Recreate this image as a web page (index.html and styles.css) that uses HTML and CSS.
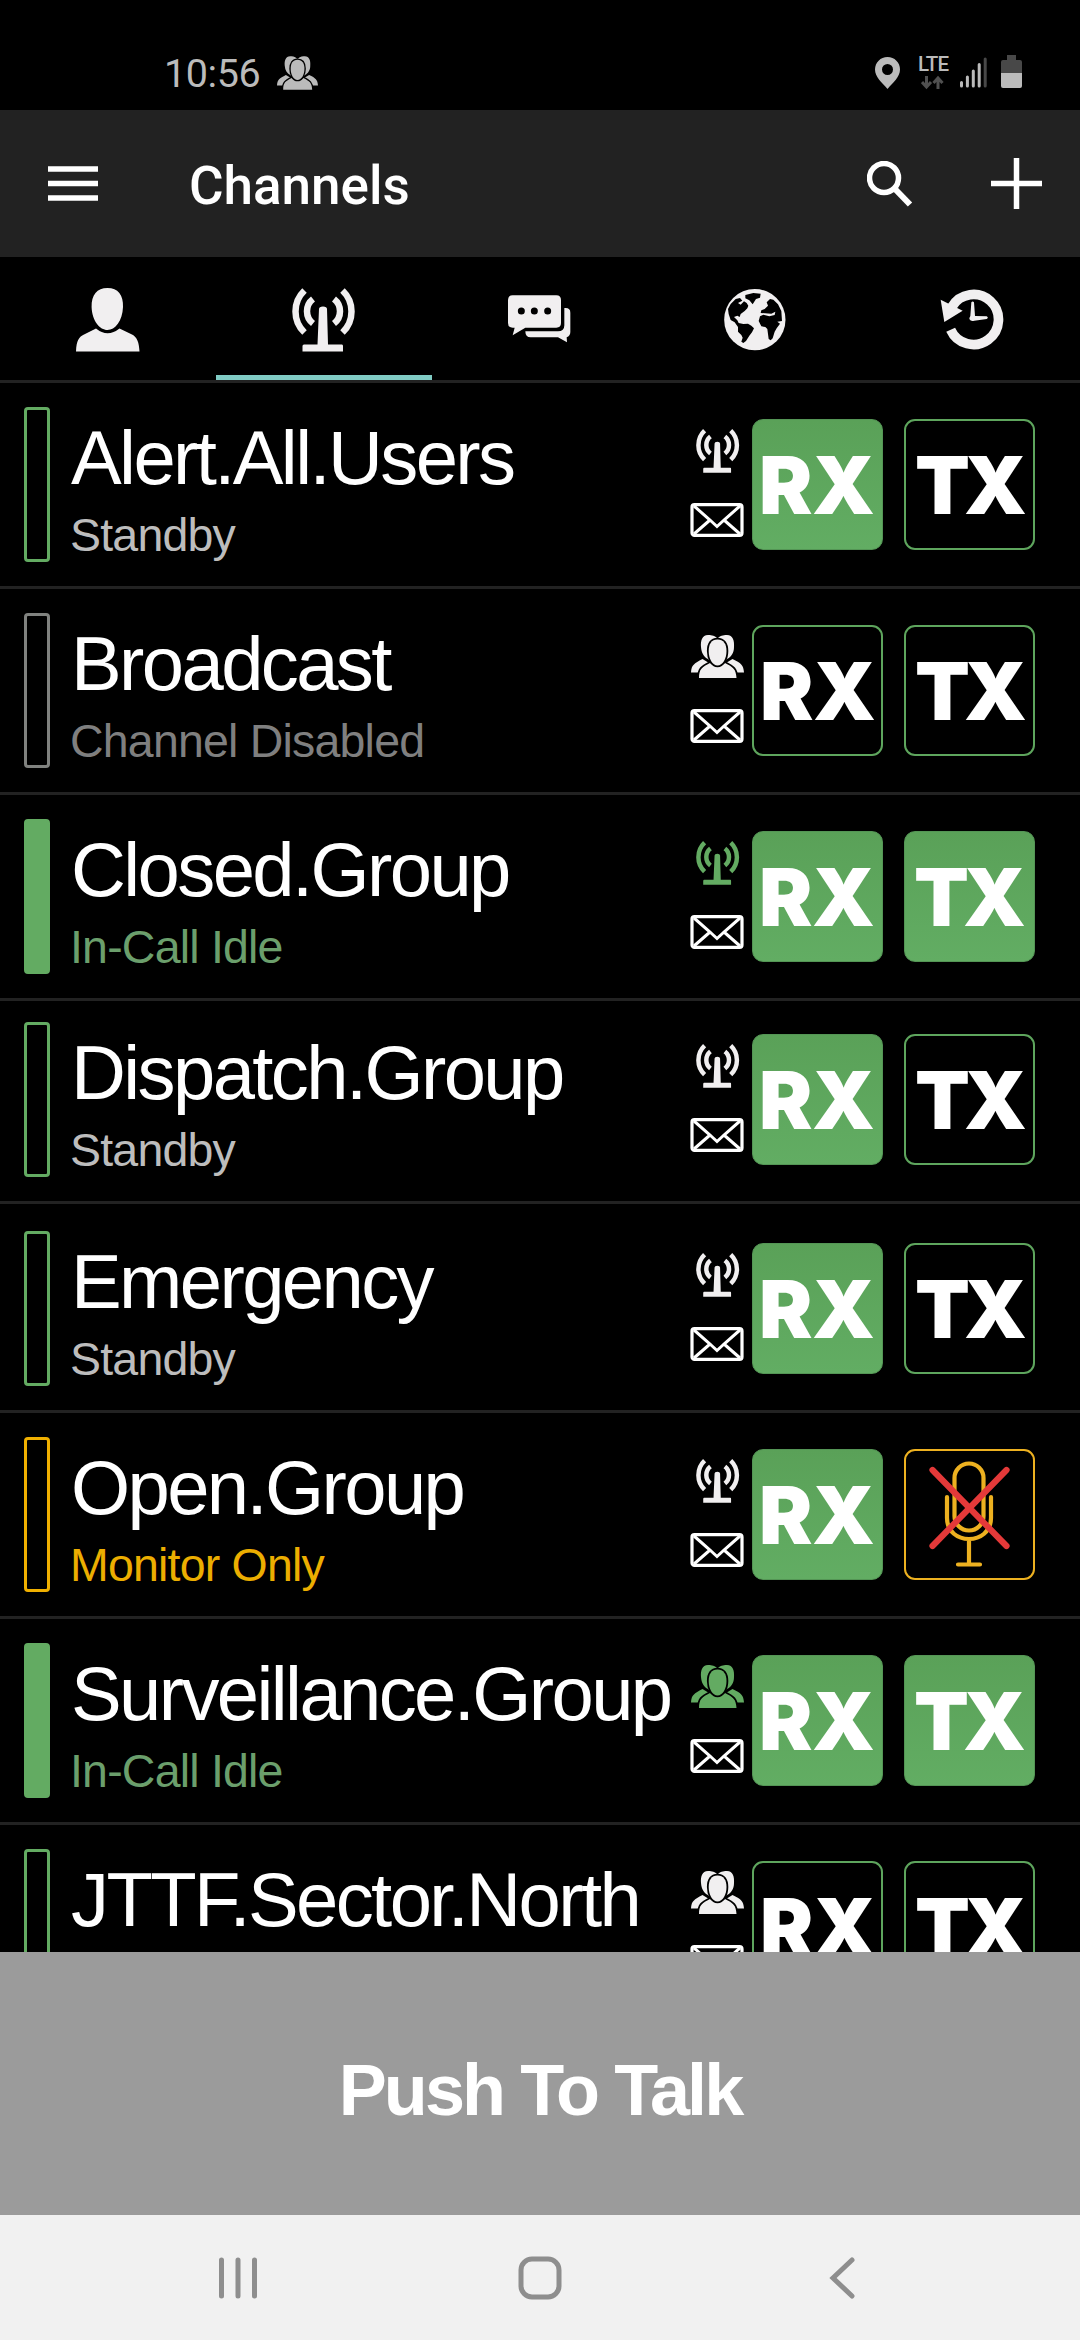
FILE: index.html
```html
<!DOCTYPE html>
<html lang="en">
<head>
    <meta charset="UTF-8">
    <meta name="viewport" content="width=device-width, initial-scale=1.0">
    <title>Channels</title>
    <link rel="stylesheet" href="styles.css">
</head>
<body>
    <!-- shared icons -->
    <svg class="sprite">
        <symbol id="antenna" viewBox="0 0 64 64">
            <g fill="none" stroke="currentColor" stroke-width="6.5">
                <path d="M12.5 2.5A29 29 0 0 0 12.5 44.5"/>
                <path d="M50.5 2.5A29 29 0 0 1 50.5 44.5"/>
                <path d="M21 11A15.5 15.5 0 0 0 21 35.500"/>
                <path d="M42 11A15.5 15.500 0 0 1 42 35.5"/>
            </g>
            <path fill="currentColor" d="M27 21Q27 18.500 31 18.500Q35 18.500 35 21L36 56.500H50Q51 56.500 51 58V63.500H10.500V58Q10.500 56.500 12 56.500H25.500Z"/>
        </symbol>
        <symbol id="people" viewBox="0 0 53 43">
            <g fill="currentColor">
                <path d="M26 3C23 0 19 0 17 0C11 0 9.500 6 10 12C10.500 18 13 22 17 24L20 27L33 27L36 24C40 22 43 18 43 12C43.500 6 42 0 36 0C34 0 30 0 27 3Z"/>
                <path d="M0 37.500C.5 30 3 28.500 11.500 24L18 28L35 28L41.500 24C50 28 52.500 30 53 37.500Z"/>
            </g>
            <g fill="currentColor" stroke="#000" stroke-width="3.6" paint-order="stroke">
                <path d="M8 43C8 34 11 32 19 28Q26.500 35 34 28C42 32 45 34 45.500 43Z"/>
                <path d="M26.500 4.500C32.500 4.500 35.500 9 35.500 16C35.500 24 31.500 30.500 26.500 30.500C21.500 30.500 17.700 24 17.700 16C17.700 9 20.500 4.500 26.500 4.500Z"/>
            </g>
        </symbol>
        <symbol id="mail" viewBox="0 0 54 34">
            <g fill="none" stroke="#fff" stroke-width="3.2">
                <rect x="2" y="1.600" width="50" height="30.800" rx="2.500"/>
                <path d="M4 3L20 17L27 23.500L34 17L50 3M4 31L20 17M50 31L34 17" stroke-width="3"/>
            </g>
        </symbol>
    </svg>

    <div class="status-bar">
        <span class="time">10:56</span>
        <svg class="status-people"><use href="#people"/></svg>
        <svg class="pin" viewBox="0 0 25 32"><path fill-rule="evenodd" d="M12.500 0C5.500 0 0 5.500 0 12.500C0 20 7 25.500 12.500 32C18 25.500 25 20 25 12.500C25 5.500 19.500 0 12.500 0ZM12.500 7A5.500 5.500 0 1 1 12.500 18A5.500 5.500 0 1 1 12.500 7Z"/></svg>
        <div class="lte">
            <span>LTE</span>
            <svg viewBox="0 0 23 15"><path fill="none" stroke="#505050" stroke-width="3" d="M5.500 1V12M1 7L5.500 12L10 7M17 14V3M12.500 8L17 3L21.500 8"/></svg>
        </div>
        <svg class="signal" viewBox="0 0 27 31"><path stroke="#bbb" stroke-width="3" stroke-linecap="round" d="M1.500 25.500V29M7.400 20V29M13.300 14V29M19.200 7.500V29"/><path stroke="#484848" stroke-width="3" stroke-linecap="round" d="M25.200 2V29"/></svg>
        <svg class="battery" viewBox="0 0 21 33"><path fill="#484848" d="M6 0H15V5H19Q21 5 21 7V18H0V7Q0 5 2 5H6Z"/><path fill="#bbb" d="M0 18H21V31Q21 33 19 33H2Q0 33 0 31Z"/></svg>
    </div>

    <div class="header">
        <svg class="menu" viewBox="0 0 50 36"><path d="M0 3H50M0 17.500H50M0 32H50"/></svg>
        <h1>Channels</h1>
        <svg class="search" viewBox="0 0 46 46"><circle cx="17" cy="17" r="14.500"/><path d="M28 28L43 43.500" stroke-width="6"/></svg>
        <svg class="plus" viewBox="0 0 51 51"><path d="M0 25.500H51M25.500 0V51"/></svg>
    </div>

    <div class="tabs">
        <div class="tab">
            <svg viewBox="0 0 64 64"><path d="M31.500 0C42 0 47.500 7 47 19C46.500 33 39 42 31.500 42C24 42 16 33 15.600 19C15.300 7 21 0 31.500 0Z"/><path d="M0 63.500C.5 52 3 49 8 46.500L20 40.500Q31.500 50 43.500 40.500L56 46.500C61 49 63 54 63.500 63.500Z"/></svg>
        </div>
        <div class="tab active">
            <svg><use href="#antenna"/></svg>
        </div>
        <div class="tab">
            <svg viewBox="0 -22 192 192"><path fill-rule="evenodd" d="M14 0H145Q159 0 159 14V83Q159 97 145 97H52L14 120L20 97H14Q0 97 0 83V14Q0 0 14 0ZM40 36.500A10.500 10.500 0 1 0 40 57.500A10.500 10.500 0 1 0 40 36.500ZM79 36.500A10.500 10.500 0 1 0 79 57.500A10.500 10.500 0 1 0 79 36.500ZM119 36.500A10.500 10.500 0 1 0 119 57.500A10.500 10.500 0 1 0 119 36.500Z"/><path d="M169 38H173Q187 38 187 52V110Q187 122 176 126L177 141L150 126H68Q52 126 52 108H150Q169 108 169 90Z"/></svg>
        </div>
        <div class="tab">
            <svg viewBox="0 -3 192 192"><circle cx="92.500" cy="92" r="92"/><path class="land" d="M14 75L12 60L20 45L35 30L48 27L55 35L42 42L50 47L60 37L68 42L73 50L70 58L62 66L50 75L47 84L40 80L30 84L40 94L44 102L58 105L72 104L82 110L90 118L84 130L76 140L66 156L58 162L52 158L56 146L52 138L42 128L42 114L32 100L20 93ZM64 18L88 12L110 14L108 26L96 30L86 46L76 34L64 28ZM104 96L108 82L118 77L136 82L152 78L154 68L142 74L110 72L112 64L122 60L132 50L128 40L138 30L148 32L162 46L172 66L174 96L160 98L168 104L158 118L152 128L146 148L140 154L134 150L130 120L124 114L112 112Z"/></svg>
        </div>
        <div class="tab">
            <svg viewBox="0 -2 192 192"><path fill="none" stroke="#f1eff0" stroke-width="29" d="M32 123A75 75 0 1 0 36 54"/><path d="M2 33L68 66L13 100ZM94 41Q98 36 102 41L105 82L140 83Q147 87 140 91L103 96Q93 100 88 91Q88 86 91 82Z"/></svg>
        </div>
    </div>

    <div class="channels">
        <div class="row">
            <div class="bar"></div>
            <div class="info">
                <div class="name">Alert.All.Users</div>
                <div class="state">Standby</div>
            </div>
            <div class="icons">
                <svg class="antenna"><use href="#antenna"/></svg>
                <svg class="mail"><use href="#mail"/></svg>
            </div>
            <div class="btn rx on"><span>RX</span></div>
            <div class="btn tx"><span>TX</span></div>
        </div>
        <div class="row">
            <div class="bar disabled"></div>
            <div class="info">
                <div class="name">Broadcast</div>
                <div class="state disabled">Channel Disabled</div>
            </div>
            <div class="icons">
                <svg class="people"><use href="#people"/></svg>
                <svg class="mail"><use href="#mail"/></svg>
            </div>
            <div class="btn rx"><span>RX</span></div>
            <div class="btn tx"><span>TX</span></div>
        </div>
        <div class="row">
            <div class="bar full"></div>
            <div class="info">
                <div class="name">Closed.Group</div>
                <div class="state idle">In-Call Idle</div>
            </div>
            <div class="icons">
                <svg class="antenna green"><use href="#antenna"/></svg>
                <svg class="mail"><use href="#mail"/></svg>
            </div>
            <div class="btn rx on"><span>RX</span></div>
            <div class="btn tx on"><span>TX</span></div>
        </div>
        <div class="row short">
            <div class="bar"></div>
            <div class="info">
                <div class="name">Dispatch.Group</div>
                <div class="state">Standby</div>
            </div>
            <div class="icons">
                <svg class="antenna"><use href="#antenna"/></svg>
                <svg class="mail"><use href="#mail"/></svg>
            </div>
            <div class="btn rx on"><span>RX</span></div>
            <div class="btn tx"><span>TX</span></div>
        </div>
        <div class="row tall">
            <div class="bar"></div>
            <div class="info">
                <div class="name">Emergency</div>
                <div class="state">Standby</div>
            </div>
            <div class="icons">
                <svg class="antenna"><use href="#antenna"/></svg>
                <svg class="mail"><use href="#mail"/></svg>
            </div>
            <div class="btn rx on"><span>RX</span></div>
            <div class="btn tx"><span>TX</span></div>
        </div>
        <div class="row">
            <div class="bar monitor"></div>
            <div class="info">
                <div class="name">Open.Group</div>
                <div class="state monitor">Monitor Only</div>
            </div>
            <div class="icons">
                <svg class="antenna"><use href="#antenna"/></svg>
                <svg class="mail"><use href="#mail"/></svg>
            </div>
            <div class="btn rx on"><span>RX</span></div>
            <div class="btn tx muted">
                <svg viewBox="2 2 127 127">
                    <g fill="none" stroke="#edb120" stroke-width="4.200" stroke-linecap="round">
                        <rect x="50.500" y="14.500" width="29" height="67" rx="14.500"/>
                        <path d="M43 48V69C43 97 87 97 87 69V48M65 90V115M54 115.500H76"/>
                    </g>
                    <path stroke="#e43939" stroke-width="6.200" stroke-linecap="round" d="M28.500 21L102.500 97M102.500 21L28.500 97"/>
                </svg>
            </div>
        </div>
        <div class="row">
            <div class="bar full"></div>
            <div class="info">
                <div class="name">Surveillance.Group</div>
                <div class="state idle">In-Call Idle</div>
            </div>
            <div class="icons">
                <svg class="people green"><use href="#people"/></svg>
                <svg class="mail"><use href="#mail"/></svg>
            </div>
            <div class="btn rx on"><span>RX</span></div>
            <div class="btn tx on"><span>TX</span></div>
        </div>
        <div class="row">
            <div class="bar"></div>
            <div class="info">
                <div class="name">JTTF.Sector.North</div>
            </div>
            <div class="icons">
                <svg class="people"><use href="#people"/></svg>
                <svg class="mail"><use href="#mail"/></svg>
            </div>
            <div class="btn rx"><span>RX</span></div>
            <div class="btn tx"><span>TX</span></div>
        </div>
    </div>

    <div class="ptt">Push To Talk</div>

    <div class="nav">
        <svg viewBox="0 0 44 44"><path d="M5.500 4V40M22 4V40M38.500 4V40"/></svg>
        <svg viewBox="0 0 44 44"><rect x="3" y="3" width="38" height="38" rx="11"/></svg>
        <svg viewBox="0 0 44 44"><path d="M32 4L13 22L32 40"/></svg>
    </div>
</body>
</html>
```
FILE: styles.css
```css
* {
    box-sizing: border-box;
}

body {
    margin: 0;
    width: 1080px;
    height: 2340px;
    overflow: hidden;
    background: #000;
    color: #fff;
    font-family: "Liberation Sans", Arial, sans-serif;
    display: flex;
    flex-direction: column;
}

svg {
    display: block;
    flex: none;
}

.sprite {
    position: absolute;
    width: 0;
    height: 0;
}

/* status bar */
.status-bar {
    height: 110px;
    flex: none;
    display: flex;
    align-items: flex-start;
    padding: 55px 58px 0 164px;
    color: #bbb;
    fill: #bbb;
    font-family: Roboto, sans-serif;
}

.time {
    width: 113px;
    font-size: 39.5px;
    line-height: 37px;
    letter-spacing: -0.4px;
}

.status-people {
    width: 41px;
    height: 34px;
    margin-top: 1px;
}

.pin {
    width: 25px;
    height: 32px;
    margin: 2px 18px 0 auto;
}

.lte {
    width: 32px;
    margin-right: 10px;
}

.lte span {
    display: block;
    font-size: 20.5px;
    font-weight: 500;
    line-height: 18px;
    letter-spacing: -0.8px;
}

.lte svg {
    width: 23px;
    height: 15px;
    margin: 2px 0 0 3px;
}

.signal {
    width: 27px;
    height: 31px;
    margin: 2px 14px 0 0;
}

.battery {
    width: 21px;
    height: 33px;
}

/* header */
.header {
    height: 147px;
    flex: none;
    display: flex;
    align-items: center;
    padding: 0 38px 0 48px;
    background: #222;
}

.header svg {
    fill: none;
    stroke: #fff;
    stroke-width: 5.5;
}

.header h1 {
    margin: 5px 0 0 91px;
    flex: 1;
    font: 500 53px Roboto, sans-serif;
}

.menu {
    width: 50px;
    height: 36px;
}

.search {
    width: 46px;
    height: 46px;
    margin-right: 78px;
}

.plus {
    width: 51px;
    height: 51px;
}

/* tabs */
.tabs {
    height: 126px;
    flex: none;
    display: flex;
    border-bottom: 3px solid #222;
    color: #f1eff0;
    fill: #f1eff0;
}

.tab {
    width: 216px;
    padding: 31px 0 0 76px;
}

.tab svg {
    width: 64px;
    height: 64px;
}

.tab .land {
    fill: #000;
}

.tab.active {
    border-bottom: 5px solid #80cbc4;
}

/* channel list */
.channels {
    height: 1569px;
    flex: none;
    overflow: hidden;
}

.row {
    height: 206px;
    display: flex;
    padding: 24px 0 0 24px;
    border-bottom: 3px solid #222;
}

.row.short {
    height: 203px;
    padding-top: 21px;
}

.row.tall {
    height: 209px;
    padding-top: 27px;
}

.bar {
    width: 26px;
    height: 155px;
    border: 3px solid #63ab62;
    border-radius: 4px;
}

.bar.full {
    background: #63ab62;
}

.bar.disabled {
    border-color: #80827f;
}

.bar.monitor {
    border-color: #f0b000;
}

.info {
    width: 640px;
    padding: 10px 0 0 21px;
    white-space: nowrap;
}

.name {
    font-size: 76px;
    line-height: 82px;
    letter-spacing: -2.6px;
}

.state {
    margin: 9px 0 0 -1px;
    font-size: 46.5px;
    line-height: 54px;
    letter-spacing: -0.8px;
    color: #bdbdbd;
}

.state.disabled {
    color: #7f7f7f;
}

.state.idle {
    color: #6b9f6c;
}

.state.monitor {
    color: #ecae00;
}

.icons {
    width: 62px;
    height: 131px;
    display: flex;
    flex-direction: column;
    justify-content: space-between;
    padding: 22px 0 1px;
    color: #f1eff0;
}

.antenna {
    width: 44px;
    height: 44px;
    margin: 0 0 0 6px;
}

.people {
    width: 53px;
    height: 43px;
    margin-left: 1px;
}

.green {
    color: #63ab62;
}

.mail {
    width: 54px;
    height: 34px;
}

.btn {
    width: 131px;
    height: 131px;
    margin-top: 12px;
    border: 2px solid #5ea55d;
    border-radius: 11px;
    font: 900 80px/127px Inter, sans-serif;
}

.btn span {
    display: block;
}

.btn.on {
    border-color: #549555;
    border-width: 1px;
    padding: 1px;
    background: linear-gradient(#5aa158, #62ad63);
}

.btn.rx,
.btn.rx.on {
    margin-right: 21px;
    padding-left: 6px;
    letter-spacing: -0.5px;
}

.btn.tx,
.btn.tx.on {
    padding-left: 9px;
    letter-spacing: -6px;
}

.btn.tx.muted {
    border-color: #edb120;
    padding: 0;
}

/* push to talk */
.ptt {
    height: 263px;
    flex: none;
    padding-top: 3px;
    background: #9b9b9b;
    font-size: 72px;
    font-weight: bold;
    line-height: 270px;
    letter-spacing: -2.9px;
    text-align: center;
}

/* android navigation */
.nav {
    flex: 1;
    display: flex;
    justify-content: space-between;
    padding: 41px 216px 0;
    background: #f1f1f1;
}

.nav svg {
    width: 44px;
    height: 44px;
    fill: none;
    stroke: #8e8e8e;
    stroke-width: 5;
    stroke-linecap: round;
}
```
